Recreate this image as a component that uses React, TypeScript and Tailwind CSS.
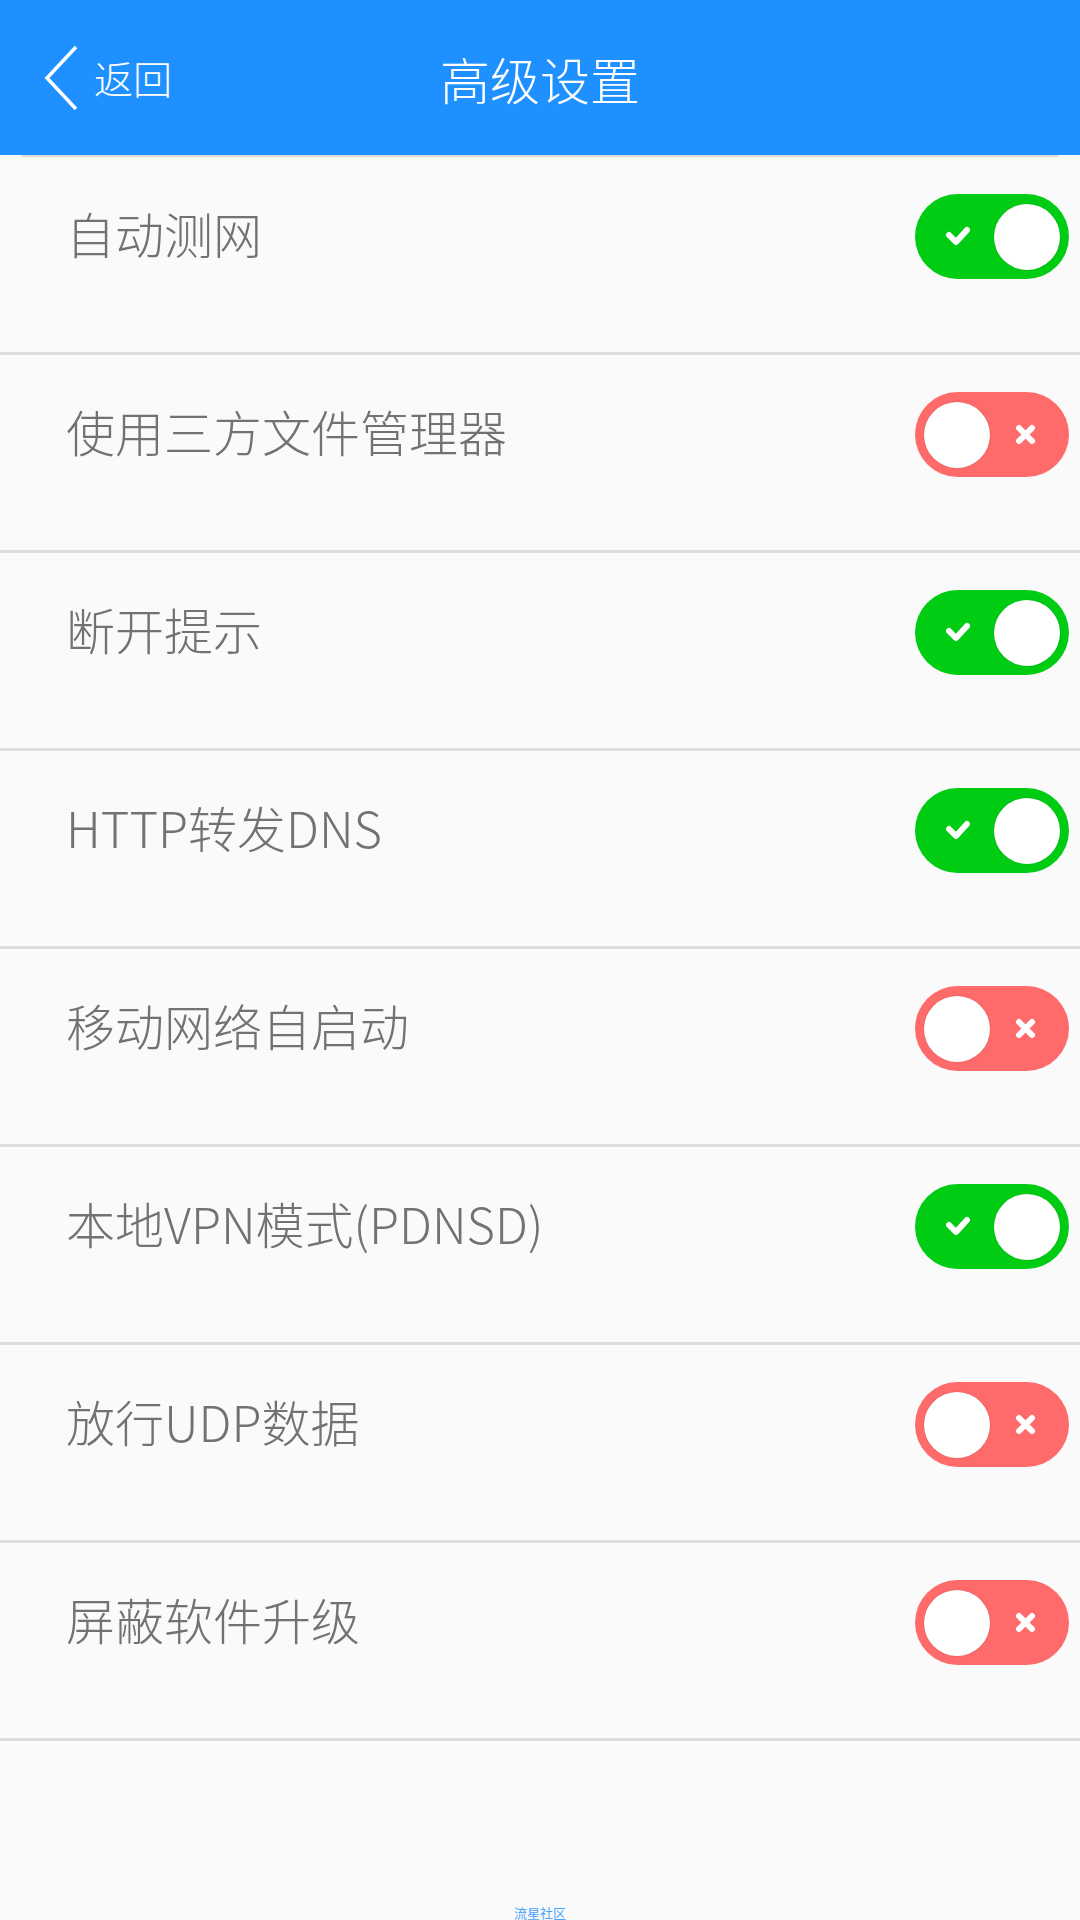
import { useState } from "react";

type Option = {
  key: string;
  label: string;
  on: boolean;
};

const OPTIONS: Option[] = [
  { key: "autoTest", label: "自动测网", on: true },
  { key: "thirdFile", label: "使用三方文件管理器", on: false },
  { key: "disconnectTip", label: "断开提示", on: true },
  { key: "httpDns", label: "HTTP转发DNS", on: true },
  { key: "mobileAuto", label: "移动网络自启动", on: false },
  { key: "localVpn", label: "本地VPN模式(PDNSD)", on: true },
  { key: "udp", label: "放行UDP数据", on: false },
  { key: "blockUpdate", label: "屏蔽软件升级", on: false },
];

function Toggle({ on, onClick }: { on: boolean; onClick: () => void }) {
  return (
    <button
      type="button"
      onClick={onClick}
      className={
        "relative flex h-[85px] w-[154px] shrink-0 items-center rounded-full px-[9px] " +
        (on ? "justify-end bg-[#00cc14]" : "justify-start bg-[#ff6b6b]")
      }
    >
      {/* 체크 / X 표시 */}
      {on ? (
        <svg
          className="absolute left-[31px] top-[31px]"
          width="24"
          height="22"
          viewBox="0 0 24 22"
          fill="none"
        >
          <path
            d="M3 10 L10 17 L21 5"
            stroke="white"
            strokeWidth="6"
            strokeLinecap="round"
            strokeLinejoin="round"
          />
        </svg>
      ) : (
        <svg
          className="absolute left-[100px] top-[32px]"
          width="21"
          height="21"
          viewBox="0 0 21 21"
          fill="none"
        >
          <path
            d="M4 4 L17 17 M17 4 L4 17"
            stroke="white"
            strokeWidth="6"
            strokeLinecap="round"
          />
        </svg>
      )}
      <span className="h-[66px] w-[66px] rounded-full bg-white shadow-[0_0_2px_rgba(0,0,0,0.18)]" />
    </button>
  );
}

export default function App() {
  const [opts, setOpts] = useState<Option[]>(OPTIONS);

  const flip = (key: string) =>
    setOpts((prev) => prev.map((o) => (o.key === key ? { ...o, on: !o.on } : o)));

  return (
    <div
      className="relative flex min-h-[1920px] w-[1080px] flex-col bg-[#fafafa]"
      style={{ fontFamily: '"Noto Sans CJK SC", "Noto Sans", sans-serif' }}
    >
      {/* ====== 상단 헤더 ====== */}
      <header className="relative flex h-[155px] items-center justify-center bg-[#1e90ff]">
        <div className="absolute left-[42px] top-0 flex h-[155px] items-center gap-[14px]">
          <svg width="38" height="66" viewBox="0 0 38 66" fill="none">
            <path d="M34 2 L5 33 L34 64" stroke="white" strokeWidth="3.5" />
          </svg>
          <span className="text-[39px] font-light leading-none text-white">返回</span>
        </div>
        <h1 className="text-[50px] font-light leading-none text-white">高级设置</h1>
      </header>
      <div className="mx-[22px] h-[2px] bg-[#dcdcdc]" />

      {/* ====== 설정 목록 ====== */}
      <div className="flex flex-col">
        {opts.map((o) => (
          <div
            key={o.key}
            className="flex h-[198px] items-start justify-between border-b-[3px] border-[#dddddd] pl-[66px] pr-[11px] pt-[37px]"
          >
            <div className="flex h-[85px] items-center pb-[8px]">
              <span className="text-[49px] font-light leading-none text-[#727272]">
                {o.label}
              </span>
            </div>
            <Toggle on={o.on} onClick={() => flip(o.key)} />
          </div>
        ))}
      </div>

      <div className="mt-auto flex justify-center pb-[1px]">
        <span className="text-[13px] leading-none text-[#4aa3ff]">流星社区</span>
      </div>
    </div>
  );
}
